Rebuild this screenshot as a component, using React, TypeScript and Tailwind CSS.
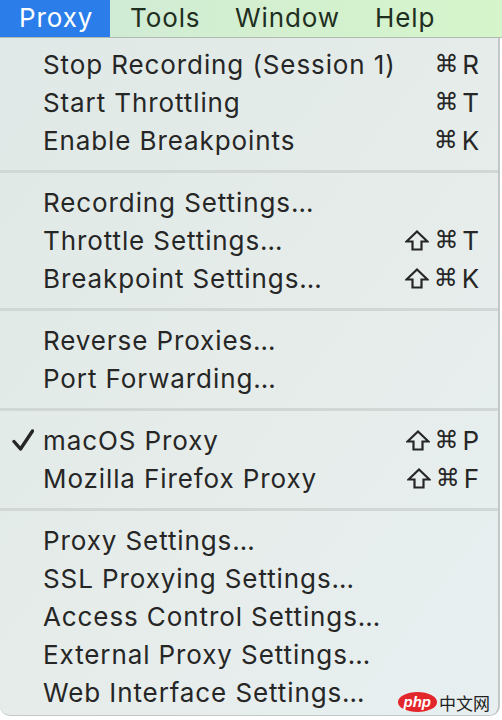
import React from "react";

type Item = { label: string; keys?: string; shift?: boolean; checked?: boolean };

const sections: Item[][] = [
    [
        { label: "Stop Recording (Session 1)", keys: "R" },
        { label: "Start Throttling", keys: "T" },
        { label: "Enable Breakpoints", keys: "K" },
    ],
    [
        { label: "Recording Settings…" },
        { label: "Throttle Settings…", keys: "T", shift: true },
        { label: "Breakpoint Settings…", keys: "K", shift: true },
    ],
    [{ label: "Reverse Proxies…" }, { label: "Port Forwarding…" }],
    [
        { label: "macOS Proxy", keys: "P", shift: true, checked: true },
        { label: "Mozilla Firefox Proxy", keys: "F", shift: true },
    ],
    [
        { label: "Proxy Settings…" },
        { label: "SSL Proxying Settings…" },
        { label: "Access Control Settings…" },
        { label: "External Proxy Settings…" },
        { label: "Web Interface Settings…" },
    ],
];

function Check() {
    return (
        <svg width="22" height="22" viewBox="0 0 22 22" fill="none">
            <path
                d="M2 12.5 L8.5 20 L20.5 2"
                stroke="#262626"
                strokeWidth={3.4}
                strokeLinecap="round"
                strokeLinejoin="round"
            />
        </svg>
    );
}

// outline shift arrow, drawn because the font glyph is too thin
function Shift() {
    return (
        <svg width="24" height="21" viewBox="0 0 24 21" fill="none" className="mr-[5px]">
            <path
                d="M12 1.5 L22.5 11.5 H16.5 V19.5 H7.5 V11.5 H1.5 Z"
                stroke="#262626"
                strokeWidth={2.2}
                strokeLinejoin="miter"
            />
        </svg>
    );
}

function Row({ item }: { item: Item }) {
    return (
        <div className="flex items-center h-[38px] pr-[18px]">
            <div className="w-[43px] flex justify-end pr-[9px]">{item.checked && <Check />}</div>
            <span className="flex-1 whitespace-nowrap">{item.label}</span>
            {item.keys && (
                <span className="flex items-center">
                    {item.shift && <Shift />}
                    <span className="font-['DejaVu_Sans',sans-serif] text-[24px] mr-[3px]">⌘</span>
                    <span>{item.keys}</span>
                </span>
            )}
        </div>
    );
}

export default function App() {
    return (
        <div className="relative w-[502px] h-[720px] overflow-hidden bg-white font-['Inter',sans-serif] text-[26px] tracking-[0.9px] text-[#262626]">
            {/* Menu bar */}
            <div className="flex h-[38px] items-center border-b border-[#b3bab2] bg-gradient-to-r from-[#cfe9d9] via-[#d3efd0] to-[#d6f5cb] text-[#1f2f1f]">
                <div className="flex h-full w-[110px] items-center bg-[#2b7ee9] pl-[19px] pb-[2px] text-white">Proxy</div>
                <div className="w-[125px] pl-[20px] pb-[2px]">Tools</div>
                <div className="w-[140px] pb-[2px]">Window</div>
                <div className="pb-[2px]">Help</div>
            </div>

            {/* Dropdown */}
            <div className="w-[500px] h-[678px] rounded-b-[10px] border-r-2 border-b border-[#c3c8c7] bg-gradient-to-br from-[#e0e9e7] via-[#e5ece9] to-[#e8eff1] pt-[7px]">
                {sections.map((sec, i) => (
                    <div key={i}>
                        {i > 0 && (
                            <div className="flex h-[24px] items-center">
                                <div className="h-[3px] w-full bg-[#d0d7d5]" />
                            </div>
                        )}
                        {sec.map((item) => (
                            <Row key={item.label} item={item} />
                        ))}
                    </div>
                ))}
            </div>

            {/* watermark */}
            <div className="absolute right-[12px] bottom-[8px] flex items-center gap-[2px] tracking-normal">
                <span className="rounded-[50%] bg-[#e3262b] px-[6px] text-[15px] italic font-bold leading-[20px] text-white font-['Liberation_Sans',sans-serif]">
                    php
                </span>
                <span className="text-[17px] text-[#222] font-['Noto_Sans_CJK_SC',sans-serif] leading-none">中文网</span>
            </div>
        </div>
    );
}
